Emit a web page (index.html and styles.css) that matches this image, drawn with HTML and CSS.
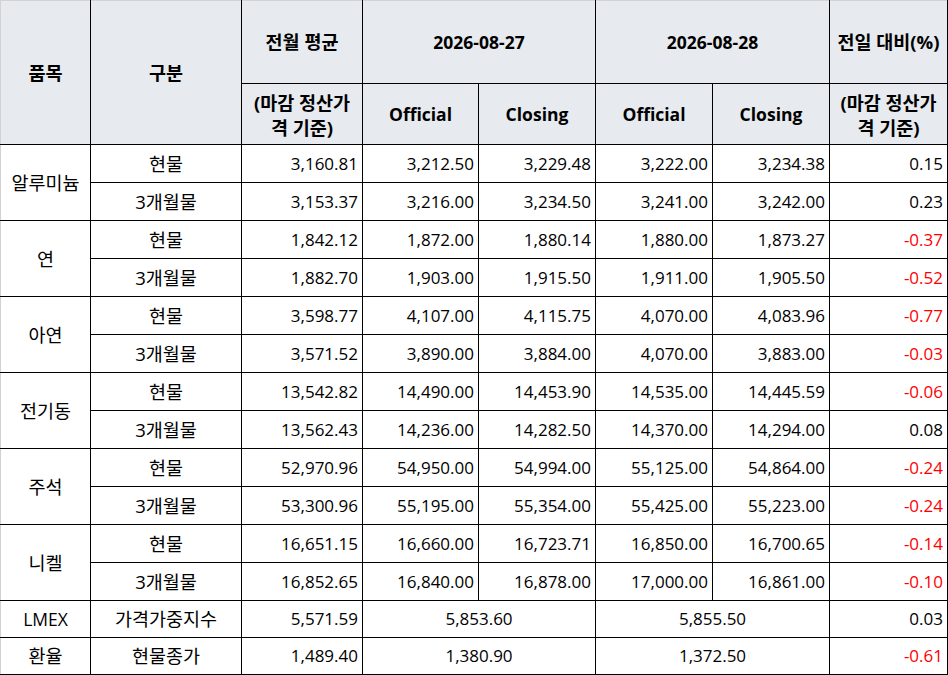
FILE: index.html
```html
<!DOCTYPE html>
<html lang="ko">
<head>
<meta charset="utf-8">
<title>LME 가격</title>
<link rel="stylesheet" href="styles.css">
</head>
<body>
<table class="price">
  <colgroup>
    <col class="c-item"><col class="c-kind"><col class="c-avg">
    <col class="c-o1"><col class="c-c1"><col class="c-o2"><col class="c-c2"><col class="c-diff">
  </colgroup>
  <thead>
    <tr class="h1">
      <th rowspan="2" class="first">품목</th>
      <th rowspan="2">구분</th>
      <th>전월 평균</th>
      <th colspan="2" class="lat">2026-08-27</th>
      <th colspan="2" class="lat">2026-08-28</th>
      <th>전일 대비(%)</th>
    </tr>
    <tr class="h2">
      <th class="sub">(마감 정산가<br>격 기준)</th>
      <th class="lat">Official</th>
      <th class="lat">Closing</th>
      <th class="lat">Official</th>
      <th class="lat">Closing</th>
      <th class="sub">(마감 정산가<br>격 기준)</th>
    </tr>
  </thead>
  <tbody>
    <tr class="r"><td rowspan="2" class="first name">알루미늄</td><td class="kind">현물</td><td class="num">3,160.81</td><td class="num">3,212.50</td><td class="num">3,229.48</td><td class="num">3,222.00</td><td class="num">3,234.38</td><td class="num">0.15</td></tr>
    <tr class="r"><td class="kind">3개월물</td><td class="num">3,153.37</td><td class="num">3,216.00</td><td class="num">3,234.50</td><td class="num">3,241.00</td><td class="num">3,242.00</td><td class="num">0.23</td></tr>
    <tr class="r"><td rowspan="2" class="first name">연</td><td class="kind">현물</td><td class="num">1,842.12</td><td class="num">1,872.00</td><td class="num">1,880.14</td><td class="num">1,880.00</td><td class="num">1,873.27</td><td class="num neg">-0.37</td></tr>
    <tr class="r"><td class="kind">3개월물</td><td class="num">1,882.70</td><td class="num">1,903.00</td><td class="num">1,915.50</td><td class="num">1,911.00</td><td class="num">1,905.50</td><td class="num neg">-0.52</td></tr>
    <tr class="r"><td rowspan="2" class="first name">아연</td><td class="kind">현물</td><td class="num">3,598.77</td><td class="num">4,107.00</td><td class="num">4,115.75</td><td class="num">4,070.00</td><td class="num">4,083.96</td><td class="num neg">-0.77</td></tr>
    <tr class="r"><td class="kind">3개월물</td><td class="num">3,571.52</td><td class="num">3,890.00</td><td class="num">3,884.00</td><td class="num">4,070.00</td><td class="num">3,883.00</td><td class="num neg">-0.03</td></tr>
    <tr class="r"><td rowspan="2" class="first name">전기동</td><td class="kind">현물</td><td class="num">13,542.82</td><td class="num">14,490.00</td><td class="num">14,453.90</td><td class="num">14,535.00</td><td class="num">14,445.59</td><td class="num neg">-0.06</td></tr>
    <tr class="r"><td class="kind">3개월물</td><td class="num">13,562.43</td><td class="num">14,236.00</td><td class="num">14,282.50</td><td class="num">14,370.00</td><td class="num">14,294.00</td><td class="num">0.08</td></tr>
    <tr class="r"><td rowspan="2" class="first name">주석</td><td class="kind">현물</td><td class="num">52,970.96</td><td class="num">54,950.00</td><td class="num">54,994.00</td><td class="num">55,125.00</td><td class="num">54,864.00</td><td class="num neg">-0.24</td></tr>
    <tr class="r"><td class="kind">3개월물</td><td class="num">53,300.96</td><td class="num">55,195.00</td><td class="num">55,354.00</td><td class="num">55,425.00</td><td class="num">55,223.00</td><td class="num neg">-0.24</td></tr>
    <tr class="r"><td rowspan="2" class="first name">니켈</td><td class="kind">현물</td><td class="num">16,651.15</td><td class="num">16,660.00</td><td class="num">16,723.71</td><td class="num">16,850.00</td><td class="num">16,700.65</td><td class="num neg">-0.14</td></tr>
    <tr class="r"><td class="kind">3개월물</td><td class="num">16,852.65</td><td class="num">16,840.00</td><td class="num">16,878.00</td><td class="num">17,000.00</td><td class="num">16,861.00</td><td class="num neg">-0.10</td></tr>
    <tr class="r2"><td class="first name lmex">LMEX</td><td class="kind">가격가중지수</td><td class="num">5,571.59</td><td colspan="2" class="mid">5,853.60</td><td colspan="2" class="mid">5,855.50</td><td class="num">0.03</td></tr>
    <tr class="r2"><td class="first name">환율</td><td class="kind">현물종가</td><td class="num">1,489.40</td><td colspan="2" class="mid">1,380.90</td><td colspan="2" class="mid">1,372.50</td><td class="num neg">-0.61</td></tr>
  </tbody>
</table>
</body>
</html>
```

FILE: styles.css
```css
html, body {
  margin: 0;
  padding: 0;
  background: #ffffff;
}

.price {
  width: 948px;
  table-layout: fixed;
  border-collapse: collapse;
  font-family: "Open Sans", "Noto Sans CJK KR", sans-serif;
  font-size: 17px;
  color: #000000;
}

.c-item { width: 90px; }
.c-kind { width: 151px; }
.c-avg { width: 121px; }
.c-o1 { width: 116px; }
.c-c1 { width: 117px; }
.c-o2 { width: 117px; }
.c-c2 { width: 117px; }
.c-diff { width: 118px; }

.price th,
.price td {
  border: 1px solid #000000;
  padding: 0;
  vertical-align: middle;
  white-space: nowrap;
}

.price th {
  background: #e7eaee;
  font-weight: 700;
  text-align: center;
  line-height: 26px;
  font-size: 18.5px;
}

.price th.lat {
  font-size: 17.5px;
}

.price .h1 th {
  border-top-color: #d2d2d2;
}

.price .first {
  border-left-color: #d2d2d2;
}

.h1 { height: 83px; }
.h2 { height: 61px; }
.r { height: 38px; }
.r2 { height: 37px; }

.price th.sub {
  line-height: 25px;
  padding-top: 1px;
}

.price td {
  line-height: 22px;
}

.name,
.kind {
  text-align: center;
  font-size: 18.5px;
}

.price .lmex {
  font-size: 17.5px;
}

.mid {
  text-align: center;
}

.num {
  text-align: right;
  padding-right: 4px !important;
}

.neg {
  color: #ff0000;
}
```
